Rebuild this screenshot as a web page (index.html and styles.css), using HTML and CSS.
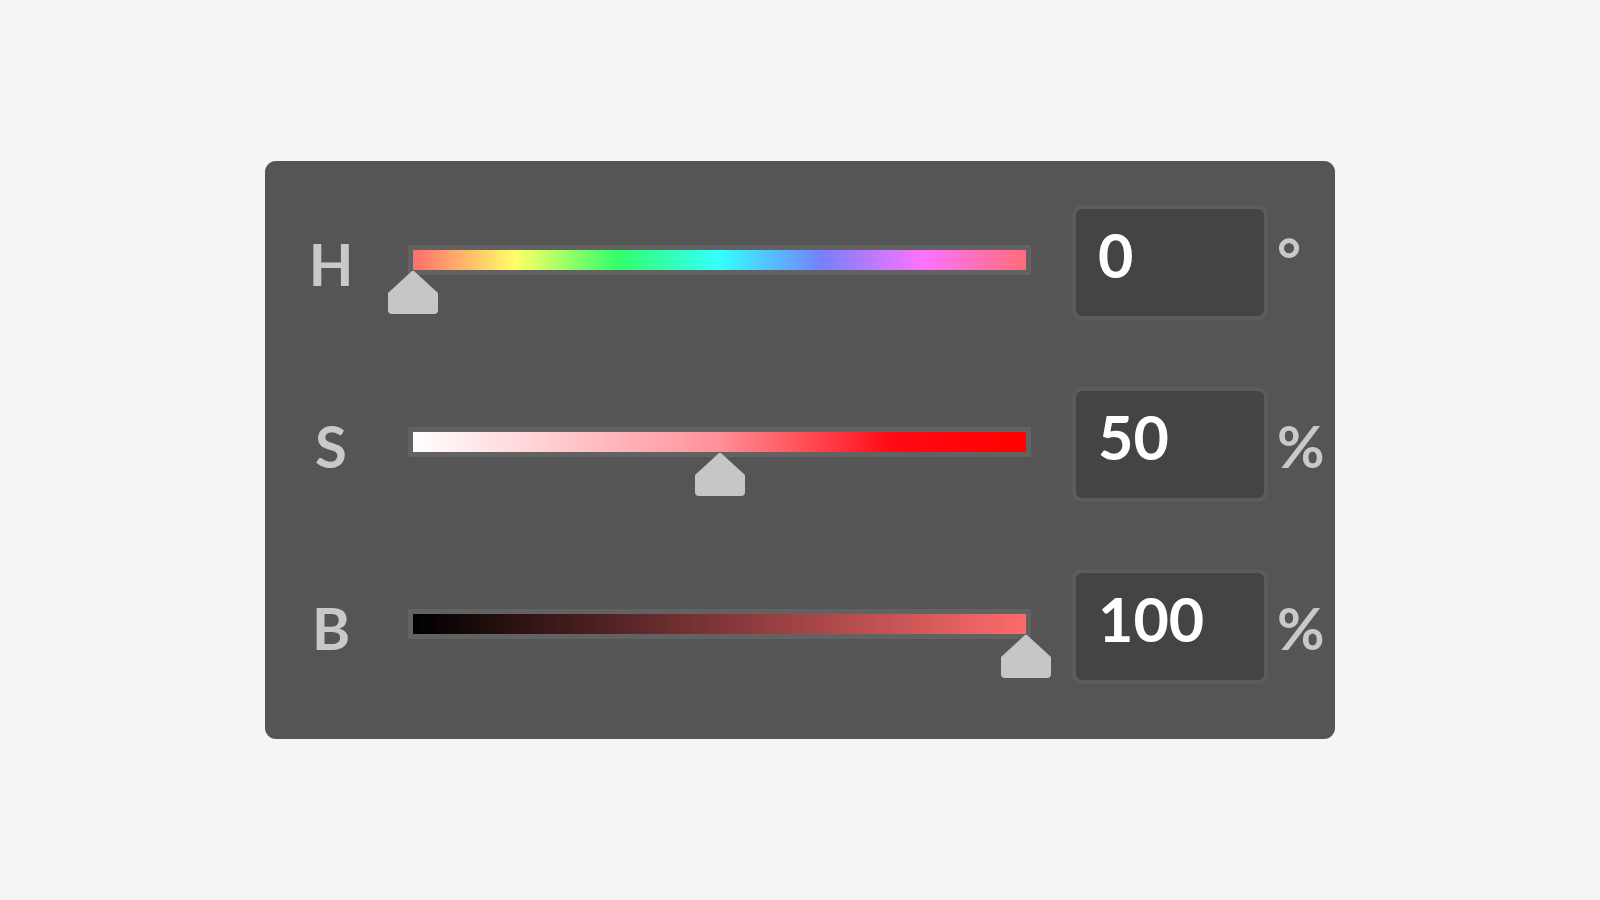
FILE: index.html
```html
<!DOCTYPE html>
<html lang="en">
<head>
    <meta charset="UTF-8">
    <meta name="viewport" content="width=device-width, initial-scale=1.0">
    <title>HSB Picker</title>
    <link rel="stylesheet" href="styles.css">
</head>
<body>
    <div class="panel">
        <div class="row">
            <span class="label">H</span>
            <div class="track">
                <div class="bar bar-hue">
                    <svg class="thumb" style="left: 0%" viewBox="0 0 50 43" width="50" height="43"><path d="M24 0 H26 L50 22 V39 Q50 43 46 43 H4 Q0 43 0 39 V22 Z"/></svg>
                </div>
            </div>
            <div class="value">0</div>
            <span class="unit deg">°</span>
        </div>
        <div class="row">
            <span class="label">S</span>
            <div class="track">
                <div class="bar bar-sat">
                    <svg class="thumb" style="left: 50%" viewBox="0 0 50 43" width="50" height="43"><path d="M24 0 H26 L50 22 V39 Q50 43 46 43 H4 Q0 43 0 39 V22 Z"/></svg>
                </div>
            </div>
            <div class="value">50</div>
            <span class="unit">%</span>
        </div>
        <div class="row">
            <span class="label">B</span>
            <div class="track">
                <div class="bar bar-bri">
                    <svg class="thumb" style="left: 100%" viewBox="0 0 50 43" width="50" height="43"><path d="M24 0 H26 L50 22 V39 Q50 43 46 43 H4 Q0 43 0 39 V22 Z"/></svg>
                </div>
            </div>
            <div class="value">100</div>
            <span class="unit">%</span>
        </div>
    </div>
</body>
</html>
```
FILE: styles.css
```css
body {
    margin: 0;
    height: 100vh;
    display: flex;
    align-items: center;
    justify-content: center;
    background-color: #f5f5f5;
    font-family: Lato, "DejaVu Sans", sans-serif;
    font-weight: bold;
}
.panel {
    width: 1070px;
    height: 578px;
    box-sizing: border-box;
    padding-top: 44px;
    background-color: #555;
    border-radius: 11px;
    display: flex;
    flex-direction: column;
    gap: 67px;
}
.row {
    display: flex;
    align-items: center;
    height: 115px;
}
.label {
    width: 132px;
    margin-top: 2px;
    text-align: center;
    font-size: 58px;
    line-height: 58px;
    color: #c9c9c9;
}
.track {
    margin: 0 0 5px 11px;
    width: 623px;
    box-sizing: border-box;
    padding: 5px;
    background-color: #626262;
    border-radius: 2px;
}
.bar {
    position: relative;
    height: 20px;
}
.bar-hue {
    background: linear-gradient(to right, #ff6d6d, #ffff66 16.7%, #33ff6a 33.3%, #33ffff 50%, #7780ff 66.7%, #ff72ff 83.3%, #ff6d78);
}
.bar-sat {
    background: linear-gradient(to right, #fff, #ff9098 50%, #ff0a14 78%, #f00);
}
.bar-bri {
    background: linear-gradient(to right, #000, #803638 50%, #ff6b6b);
}
/* slider handle hangs below the bar */
.thumb {
    position: absolute;
    top: calc(100% + 1px);
    transform: translateX(-50%);
    fill: #c6c6c6;
}
.value {
    margin-left: 41px;
    width: 196px;
    height: 115px;
    box-sizing: border-box;
    padding: 15px 0 0 22px;
    background-color: #444;
    border: 4px solid #5c5c5c;
    border-radius: 10px;
    font-size: 61px;
    line-height: 61px;
    color: #fff;
}
.unit {
    margin-left: 9px;
    margin-top: 2px;
    font-size: 58px;
    line-height: 58px;
    color: #c9c9c9;
}
.unit.deg {
    margin-top: -8px;
}
```
